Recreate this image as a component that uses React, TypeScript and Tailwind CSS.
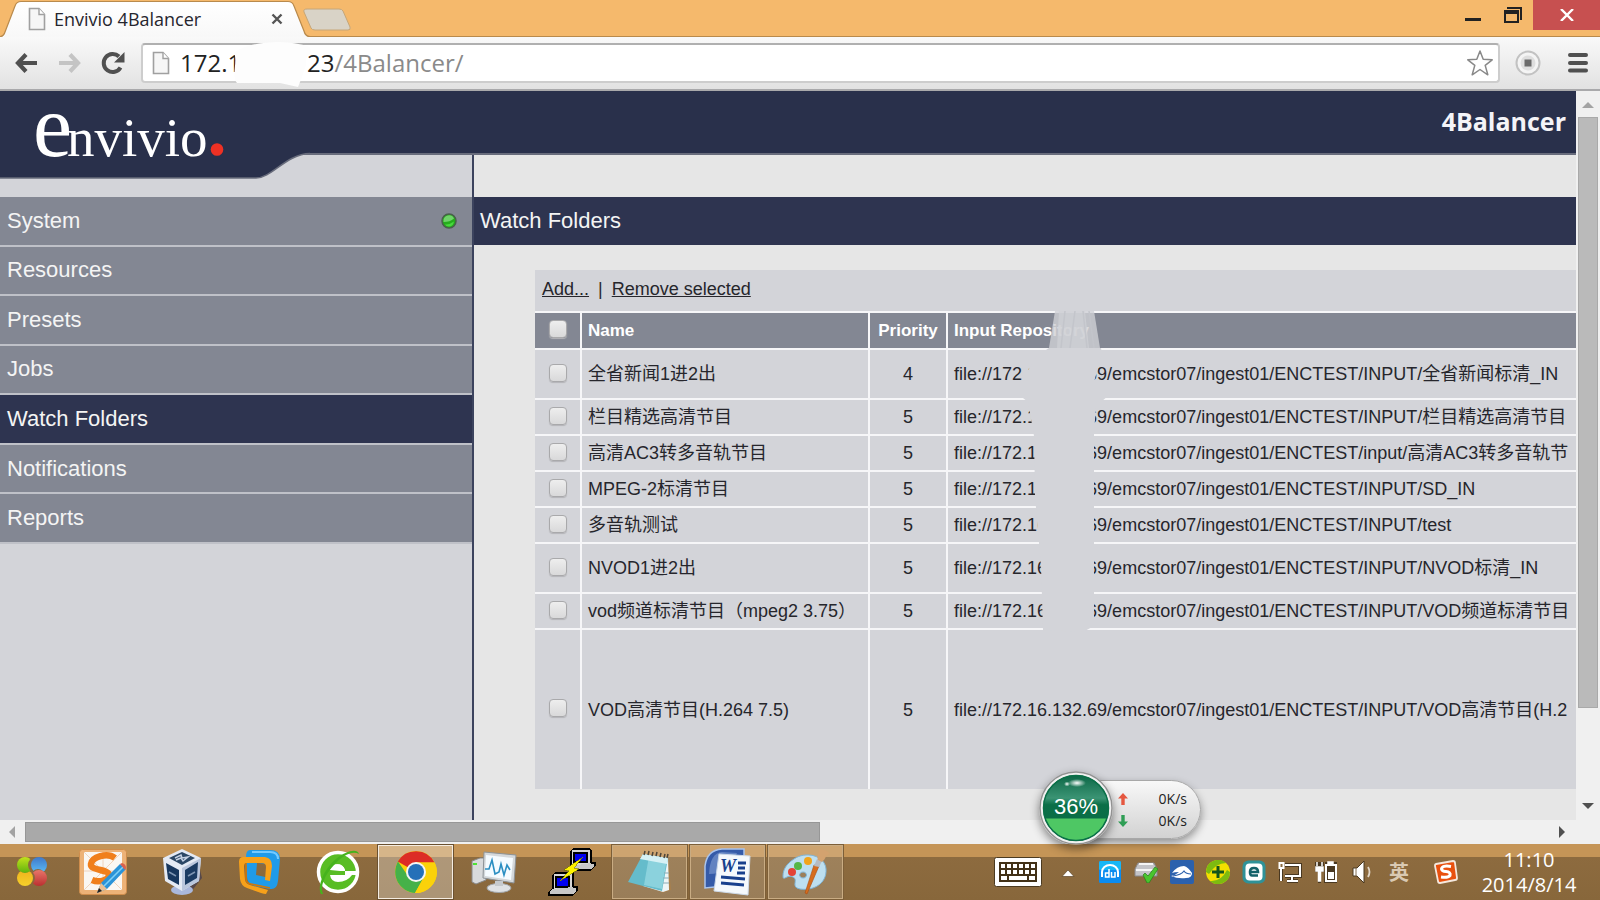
import type { ReactNode } from "react";

const sans = "font-['Liberation_Sans','Noto_Sans_CJK_SC',sans-serif]";
const ui = "font-['Open_Sans','Noto_Sans_CJK_SC',sans-serif]";

const navItems = ["System", "Resources", "Presets", "Jobs", "Watch Folders", "Notifications", "Reports"];

const base = "file://172.16.132.69/emcstor07/ingest01/ENCTEST/";

const rows = [
  { name: "全省新闻1进2出", priority: 4, input: "INPUT/全省新闻标清_IN", height: "h-[50px]" },
  { name: "栏目精选高清节目", priority: 5, input: "INPUT/栏目精选高清节目", height: "h-[36px]" },
  { name: "高清AC3转多音轨节目", priority: 5, input: "input/高清AC3转多音轨节", height: "h-[36px]" },
  { name: "MPEG-2标清节目", priority: 5, input: "INPUT/SD_IN", height: "h-[36px]" },
  { name: "多音轨测试", priority: 5, input: "INPUT/test", height: "h-[36px]" },
  { name: "NVOD1进2出", priority: 5, input: "INPUT/NVOD标清_IN", height: "h-[50px]" },
  { name: "vod频道标清节目（mpeg2 3.75）", priority: 5, input: "INPUT/VOD频道标清节目", height: "h-[36px]" },
  { name: "VOD高清节目(H.264 7.5)", priority: 5, input: "INPUT/VOD高清节目(H.2", height: "h-[161px]" },
];

function PageIcon() {
  return (
    <svg width="18" height="24" viewBox="0 0 18 24" className="shrink-0">
      <path d="M1.5 1.5h9.5l5.5 6v15h-15z" fill="#f6f6f6" stroke="#a0a0a0" strokeWidth="1.6" />
      <path d="M11 1.5v6h5.5" fill="#fff" stroke="#a0a0a0" strokeWidth="1.4" />
    </svg>
  );
}

function TabStrip() {
  return (
    <div className="relative flex h-[37px] shrink-0 items-start justify-between border-b border-[#b98a4c] bg-[#f5b96c]">
      <div className="relative h-[37px] w-[360px]">
        <svg width="360" height="37" viewBox="0 0 360 37" className="absolute left-0 top-0">
          <defs>
            <linearGradient id="tab" x1="0" y1="0" x2="0" y2="1">
              <stop offset="0" stopColor="#ffffff" />
              <stop offset="1" stopColor="#f8f8f8" />
            </linearGradient>
          </defs>
          <path d="M0 37C3 37 4 35 5 32L15 6C16 3 18 1.5 21 1.5H288C291 1.5 293 3 294 6L304 31C305 35 307 37 310 37Z" fill="url(#tab)" />
          <path d="M0 36.500C3 36.500 4 35 5 32L15 6C16 3 18 1.500 21 1.500H288C291 1.500 293 3 294 6L304 31C305 35 307 36.500 310 36.500" fill="none" stroke="#b98a4c" strokeWidth="1.2" />
          <path d="M307 9H339Q342 9 343 11L350 27Q351 30 348 30H315Q312 30 311 28L304 12Q303 9 307 9Z" fill="#d9d3c7" stroke="#c6a678" />
        </svg>
        <div className="relative flex h-[37px] items-center pl-[28px] pt-px">
          <PageIcon />
          <span className="ml-[8px] w-[217px] text-[18px] leading-6 text-[#26262e]">Envivio 4Balancer</span>
          <button type="button" aria-label="Close tab" className="flex size-3">
            <svg width="12" height="12" viewBox="0 0 12 12"><path d="M1.500 1.500l9 9M10.500 1.500l-9 9" stroke="#555" strokeWidth="2.4" /></svg>
          </button>
        </div>
      </div>
      <div className="flex">
        <button type="button" aria-label="Minimize" className="flex h-[30px] w-[40px] items-center justify-center">
          <svg width="16" height="20" viewBox="0 0 16 20"><rect y="13" width="16" height="3" fill="#222" /></svg>
        </button>
        <button type="button" aria-label="Restore" className="flex h-[30px] w-[40px] items-center justify-center">
          <svg width="18" height="16" viewBox="0 0 18 16">
            <path d="M3 1h14v12" fill="none" stroke="#222" strokeWidth="2" />
            <path d="M1 5h13v10H1z" fill="none" stroke="#222" strokeWidth="2" />
            <path d="M0 3h15v4H0z" fill="#222" />
          </svg>
        </button>
        <button type="button" aria-label="Close window" className="flex h-[30px] w-[67px] items-center justify-center bg-[#c75050]">
          <svg width="14" height="12" viewBox="0 0 14 12"><path d="M1 0l12 12M13 0L1 12" stroke="#fff" strokeWidth="2.400" /></svg>
        </button>
      </div>
    </div>
  );
}

function Toolbar() {
  return (
    <div className="flex h-[54px] shrink-0 items-center border-b-2 border-[#a9a9ab] bg-linear-to-b from-[#f9f9f9] to-[#e2e2e2] pl-[15px] pr-[12px]">
      <button type="button" aria-label="Back" className="w-[43px]">
        <svg width="23" height="20" viewBox="0 0 23 20"><path d="M22 10H3M11 1.500L3 10l8 8.500" fill="none" stroke="#505050" strokeWidth="4.200" /></svg>
      </button>
      <button type="button" aria-label="Forward" className="w-[43px]">
        <svg width="23" height="20" viewBox="0 0 23 20"><path d="M1 10h19M12 1.500l8 8.500-8 8.500" fill="none" stroke="#c4c4c4" strokeWidth="4.200" /></svg>
      </button>
      <button type="button" aria-label="Reload" className="w-[40px]">
        <svg width="25" height="24" viewBox="0 0 25 24">
          <path d="M19.500 16.500A9 9 0 1 1 18 5.500" fill="none" stroke="#505050" strokeWidth="4" />
          <path d="M23.500 1v10.500H13z" fill="#505050" />
        </svg>
      </button>
      <div className="relative flex h-[40px] flex-1 items-center rounded-[4px] border-2 border-[#cdcdcd] border-t-[#b0b0b0] bg-white pl-[9px] pr-[4px]">
        <PageIcon />
        <div className="ml-[10px] flex flex-1 text-[24px] leading-8 text-[#8a8a8a]">
          <span className="w-[127px] text-[#222]">172.1</span>
          <span className="text-[#222]">23</span>
          <span>/4Balancer/</span>
        </div>
        <svg width="80" height="46" viewBox="0 0 80 46" className="absolute left-[89px] -top-[4px]">
          <path d="M2 12C15 1 52 -3 78 6L79 12Q73 14 74 24L70 36L66 46L48 42H5C-1 36 6 20 2 12Z" fill="#fdfdfd" />
        </svg>
        <button type="button" aria-label="Bookmark this page">
          <svg width="28" height="28" viewBox="0 0 28 28">
            <path d="M14 2l3.200 8.300 9 .5-7 5.600 2.600 9.400L14 20.500l-7.800 5.300 2.600-9.400-7-5.600 9-.5z" fill="#fff" stroke="#888" strokeWidth="1.500" strokeLinejoin="round" />
          </svg>
        </button>
      </div>
      <button type="button" aria-label="Extension" className="ml-[15px]">
        <svg width="26" height="26" viewBox="0 0 26 26">
          <circle cx="13" cy="13" r="11.500" fill="#f4f4f4" stroke="#c2c2c2" strokeWidth="2" />
          <circle cx="13" cy="13" r="7.500" fill="#dedede" />
          <rect x="9.500" y="9.500" width="7" height="7" fill="#6a6a6a" />
        </svg>
      </button>
      <button type="button" aria-label="Menu" className="ml-[27px]">
        <svg width="20" height="22" viewBox="0 0 20 22"><path d="M2 3h16M2 11h16M2 18.500h16" stroke="#505050" strokeWidth="4" strokeLinecap="round" /></svg>
      </button>
    </div>
  );
}

function Brand() {
  return (
    <header className="relative z-10 flex h-[64px] shrink-0 justify-between border-b-2 border-[#686c7c] bg-[#29304b] pl-[33px] pr-[10px]">
      <svg width="320" height="27" viewBox="0 0 320 27" className="absolute left-0 top-[61px]">
        <path d="M0 0V26H256C272 26 286 2 310 1.500V0Z" fill="#29304b" />
        <path d="M0 26H256C272 26 286 2 310 1.500" fill="none" stroke="#686c7c" strokeWidth="1.500" />
      </svg>
      <div className="relative flex items-baseline font-['Liberation_Serif',serif] text-[55px] leading-[72px] text-white">
        <span className="w-[34px] text-[88px]">e</span>
        <span>nvivio</span>
        <svg width="18" height="13" viewBox="0 0 18 13"><circle cx="9" cy="6.500" r="6.300" fill="#ee3124" /></svg>
      </div>
      <h1 className="pt-[14px] text-[25px] font-bold leading-8 text-[#f4f4f8]">4Balancer</h1>
    </header>
  );
}

function Sidebar() {
  return (
    <aside className={`w-[474px] shrink-0 border-r-2 border-[#3c435e] bg-[#d3d4d9] pt-[42px] ${sans}`}>
      <nav className="grid h-[347px] grid-rows-7">
        {navItems.map((item) => (
          <a
            key={item}
            href="#"
            className={`flex items-center justify-between border-b-2 border-[#bfc1c8] pl-[7px] pr-[15px] text-[22px] leading-6 text-[#f4f4f4] ${item === "Watch Folders" ? "bg-[#2e3450]" : "bg-[#838793]"}`}
          >
            {item}
            {item === "System" && (
              <svg width="16" height="16" viewBox="0 0 16 16">
                <circle cx="8" cy="8" r="7" fill="#25ad1c" stroke="#48604a" strokeWidth="1.500" />
                <path d="M2.500 8A5.500 5.500 0 0 1 13 5.500Q9 9 2.500 9Z" fill="#70d26a" />
                <path d="M4 11.500Q8 12 13 8.500Q12 13.500 8 13.500Q5 13.500 4 11.500Z" fill="#48d83e" />
              </svg>
            )}
          </a>
        ))}
      </nav>
    </aside>
  );
}

function Tick({ label }: { label: string }) {
  return (
    <input
      type="checkbox"
      aria-label={label}
      className="mx-auto block size-[18px] appearance-none rounded-[4px] border border-[#a9a9ab] bg-linear-to-b from-[#eeeeee] to-[#d9d9da] shadow-[0_1px_1px_#b4b4b8]"
    />
  );
}

function FolderTable() {
  const cell = "border-t-2 border-l-2 border-[#f6f6f8] px-[6px]";
  const tickCell = "border-t-2 border-[#f6f6f8] pb-[3px]";
  return (
    <table className="w-full table-fixed border-separate border-spacing-0 whitespace-nowrap text-left text-[18px] leading-6 text-[#26262c]">
      <colgroup>
        <col className="w-[45px]" />
        <col className="w-[288px]" />
        <col className="w-[78px]" />
        <col />
      </colgroup>
      <thead>
        <tr className="h-[37px] bg-[#838793] text-[17px] text-white">
          <th className={tickCell}><Tick label="Select all" /></th>
          <th className={cell}>Name</th>
          <th className={`${cell} text-center`}>Priority</th>
          <th className={cell}>Input Repository</th>
        </tr>
      </thead>
      <tbody>
        {rows.map((row) => (
          <tr key={row.name} className={`bg-[#d3d4d9] ${row.height}`}>
            <td className={tickCell}><Tick label={row.name} /></td>
            <td className={cell}>{row.name}</td>
            <td className={`${cell} text-center`}>{row.priority}</td>
            <td className={cell}>{base}{row.input}</td>
          </tr>
        ))}
      </tbody>
    </table>
  );
}

function Smudge() {
  return (
    <svg width="100" height="334" viewBox="0 0 100 334" className="absolute left-[488px] top-[36px]">
      <path d="M32 5H71L77 42H26Z" fill="#d0d1d6" opacity=".8" />
      <path d="M36 5H62L66 42H34Z" fill="#d0d1d6" opacity=".7" />
      <path d="M42 5L38 42M52 5L47 42M60 5L64 42M66 5L71 42" stroke="#c3c5cb" strokeWidth="1.500" />
      <path d="M26 42H78L79 48L71 76L85 90L73 100L71 128V320L60 326L20 324L18 260L12 190L11 130L5 96L0 92V72L14 50Z" fill="#d3d4d9" />
    </svg>
  );
}

function MainPanel() {
  return (
    <main className={`min-w-0 flex-1 overflow-hidden bg-[#e6e6e6] pt-[42px] ${sans}`}>
      <h2 className="h-[48px] bg-[#2e3450] pl-[6px] text-[22px] leading-[48px] text-[#f4f4f4]">Watch Folders</h2>
      <div className="relative ml-[61px] mt-[25px]">
        <div className="flex h-[41px] items-center gap-[9px] bg-[#d3d4d9] pl-[7px] pb-[3px] text-[18px] leading-6 text-[#26262c]">
          <a href="#" className="underline">Add...</a>
          <span>|</span>
          <a href="#" className="underline">Remove selected</a>
        </div>
        <FolderTable />
        <Smudge />
      </div>
    </main>
  );
}

function VerticalScroll() {
  return (
    <div className="flex w-[24px] shrink-0 flex-col items-center bg-[#f0f0f0]">
      <svg width="24" height="26" viewBox="0 0 24 26"><path d="M6 17l6-6 6 6z" fill="#a3a3a3" /></svg>
      <div className="w-[20px] flex-[591] border border-[#a9a9a9] bg-[#bababa]" />
      <div className="flex-[84]" />
      <svg width="24" height="28" viewBox="0 0 24 28"><path d="M6 11h12l-6 6z" fill="#505050" /></svg>
    </div>
  );
}

function HorizontalScroll() {
  return (
    <div className="flex h-[24px] shrink-0 items-center bg-[#f0f0f0] pr-[24px]">
      <svg width="25" height="24" viewBox="0 0 25 24"><path d="M15 6v12l-6-6z" fill="#a3a3a3" /></svg>
      <div className="h-[20px] flex-[794] border border-[#979797] bg-[#a9a9a9]" />
      <div className="flex-[729]" />
      <svg width="28" height="24" viewBox="0 0 28 24"><path d="M11 6v12l6-6z" fill="#505050" /></svg>
    </div>
  );
}

function SpeedWidget() {
  return (
    <div className={`absolute bottom-[55px] right-[399px] z-20 flex items-center ${sans}`}>
      <div className="relative z-10 size-[74px] rounded-full shadow-[0_4px_10px_rgba(0,0,0,0.45)]">
        <svg width="74" height="74" viewBox="0 0 74 74" className="absolute left-0 top-0">
          <defs>
            <linearGradient id="ball" x1="0" y1="0" x2="0" y2="1">
              <stop offset="0" stopColor="#0c6746" />
              <stop offset="0.350" stopColor="#3b9474" />
              <stop offset="0.450" stopColor="#0b6f48" />
              <stop offset="1" stopColor="#096c44" />
            </linearGradient>
            <radialGradient id="shine"><stop offset="0" stopColor="#fff" /><stop offset="1" stopColor="#fff" stopOpacity="0" /></radialGradient>
          </defs>
          <circle cx="37" cy="37" r="36" fill="#f1f1f1" stroke="#929292" strokeWidth="1.500" />
          <circle cx="37" cy="37" r="33" fill="url(#ball)" />
          <path d="M6 47.500H68A33 33 0 0 1 6 47.500Z" fill="#4ec764" />
          <circle cx="37" cy="37" r="32.500" fill="none" stroke="#0a7048" strokeWidth="1.500" />
          <ellipse cx="38" cy="12" rx="9" ry="4" fill="url(#shine)" />
          <ellipse cx="28" cy="13" rx="3" ry="2.500" fill="url(#shine)" />
        </svg>
        <span className="relative block text-center text-[22px] leading-[72px] text-white">36%</span>
      </div>
      <div className={`-ml-[30px] mt-[3px] flex h-[59px] w-[118px] flex-col justify-center rounded-r-full border border-[#a8a8a8] bg-linear-to-b from-[#f8f8f8] to-[#d2d2d2] pl-[34px] pr-[13px] text-[14px] leading-[22px] text-[#222] shadow-[0_4px_8px_rgba(0,0,0,0.4)] ${ui}`}>
        <div className="flex items-center justify-between">
          <svg width="10" height="12" viewBox="0 0 10 12"><path d="M5 0l5 5.500H6.700V12H3.300V5.500H0z" fill="#e5573f" /></svg>
          <span>0K/s</span>
        </div>
        <div className="flex items-center justify-between">
          <svg width="10" height="12" viewBox="0 0 10 12"><path d="M5 12l5-5.500H6.700V0H3.300v6.500H0z" fill="#2f9e55" /></svg>
          <span>0K/s</span>
        </div>
      </div>
    </div>
  );
}

function StartOrb() {
  return (
    <svg width="32" height="32" viewBox="0 0 32 32">
      <defs>
        <mask id="bite-green"><rect width="32" height="32" fill="#fff" /><circle cx="20" cy="9" r="8" fill="#000" /></mask>
        <mask id="bite-blue"><rect width="32" height="32" fill="#fff" /><circle cx="22" cy="20" r="7" fill="#000" /></mask>
        <mask id="bite-red"><rect width="32" height="32" fill="#fff" /><circle cx="11" cy="22" r="8" fill="#000" /></mask>
        <mask id="bite-yellow"><rect width="32" height="32" fill="#fff" /><circle cx="9" cy="10" r="7" fill="#000" /></mask>
        <linearGradient id="green-leaf" x1="0" y1="0" x2="0" y2="1"><stop offset="0" stopColor="#c3e21c" /><stop offset="1" stopColor="#5fb20e" /></linearGradient>
        <linearGradient id="blue-leaf" x1="0" y1="0" x2="0" y2="1"><stop offset="0" stopColor="#3f78c9" /><stop offset="1" stopColor="#5bbcf7" /></linearGradient>
        <linearGradient id="red-leaf" x1="0" y1="0" x2="0" y2="1"><stop offset="0" stopColor="#e8766a" /><stop offset="1" stopColor="#bb2f30" /></linearGradient>
        <linearGradient id="yellow-leaf" x1="0" y1="0" x2="0" y2="1"><stop offset="0" stopColor="#efb31c" /><stop offset="1" stopColor="#f6d02b" /></linearGradient>
      </defs>
      <circle cx="9" cy="9" r="8" fill="url(#green-leaf)" mask="url(#bite-green)" />
      <circle cx="23" cy="9" r="8" fill="url(#blue-leaf)" mask="url(#bite-blue)" />
      <circle cx="23" cy="22" r="8" fill="url(#red-leaf)" mask="url(#bite-red)" />
      <circle cx="9" cy="22" r="8" fill="url(#yellow-leaf)" mask="url(#bite-yellow)" />
    </svg>
  );
}

function NoteIcon() {
  return (
    <svg width="49" height="46" viewBox="0 0 49 46">
      <rect x="0.500" y="0.500" width="47" height="45" rx="3" fill="#edb277" stroke="#cf8d4c" />
      <rect x="5" y="3" width="38" height="38" fill="#faf7f3" />
      <path d="M5 3l38 38M43 3L5 41M24 3v38M5 22h38" stroke="#eccaae" strokeWidth="0.800" />
      <path d="M36 9C28 3 13 8 12 15C11 22 30 20 30 26C30 31 20 34 13 31" fill="none" stroke="#f07f1c" strokeWidth="6.500" />
      <path d="M18 44l4-10 19-19 6 5-19 20z" fill="#2a93d8" />
      <path d="M25 37l19-19" stroke="#7fd0f5" strokeWidth="1.600" />
      <path d="M18 44l4-10 6 6z" fill="#eabf92" />
      <path d="M18 44l2-5 3 3z" fill="#222" />
      <path d="M41 15l2-1q4 1 4 5l-1 2z" fill="#d9614f" />
    </svg>
  );
}

function CubeIcon() {
  return (
    <svg width="42" height="48" viewBox="0 0 42 48">
      <path d="M38 18l3 12-12 15-8-3z" fill="#2c2d55" opacity=".55" />
      <ellipse cx="21" cy="42" rx="11" ry="5" fill="#aab8dc" />
      <path d="M2 10L21 1l19 9-2 23-17 10L4 33z" fill="#e4eaf4" />
      <path d="M21 20v23l17-10 2-23z" fill="#bac7dd" />
      <path d="M8 10l13-6 13 6-13 7z" fill="#2b4765" />
      <path d="M5 15l13 7v15L7 31z" fill="#17375e" />
      <path d="M24 22l13-8-1 16-12 7z" fill="#1a3b62" />
      <path d="M14 10l6-3 1 3 6-1-5 4-2-3-5 2" stroke="#c5d1e3" fill="none" strokeWidth="1.500" />
      <path d="M8 24l7 4M27 28l7-4" stroke="#7e95b2" strokeWidth="1.500" />
    </svg>
  );
}

function SquaresIcon() {
  return (
    <svg width="44" height="46" viewBox="0 0 44 46">
      <path d="M12 1h20q10 0 10 9l-2 22q-1 9-8 8l-15-3q-8-2-8-9L8 8q0-7 4-7zM19 14l-1 12 14 3 1-14z" fill="#209be9" fillRule="evenodd" />
      <path d="M14 3h18q8 0 8 7" fill="none" stroke="#75caff" strokeWidth="2" />
      <path d="M5 8h22q7 1 7 9l-2 15-5-1 1-13q0-4-4-4H8q-2 0-2 4l1 13q1 4 5 5l18 5-2 4q-2 0-5-1L9 39q-6-2-7-9L1 13q0-5 4-5z" fill="#f7a11a" />
      <path d="M8 14v16q0 4 5 5l19 4" fill="none" stroke="#d27808" strokeWidth="1.500" />
    </svg>
  );
}

function BrowserEIcon() {
  return (
    <svg width="44" height="48" viewBox="0 0 44 48">
      <circle cx="22" cy="24" r="19.500" fill="#58bd24" stroke="#fff" strokeWidth="3.500" />
      <path d="M14 22A8 9 0 0 1 29 22ZM14 27H28L36 27Q31 34 22 34Q15 34 14 27Z" fill="#fff" />
      <path d="M14 22A8 9 0 0 1 29 22V27H41V23H24" fill="#fff" />
      <path d="M5 46C1 38 8 21 20 11C30 3 41 0 43 6C36 2 26 8 18 17C8 28 4 38 7 46Z" fill="#46b31d" />
    </svg>
  );
}

function ChromeIcon() {
  return (
    <svg width="44" height="44" viewBox="0 0 44 44">
      <circle cx="22" cy="22" r="21" fill="#fbd20a" />
      <path d="M22 22L3.800 11.500A21 21 0 0 1 40.500 12.500H22Z" fill="#dc2c26" />
      <path d="M4 11.500A21 21 0 0 0 21 43L30 27L22 22L14 26Z" fill="#45b149" />
      <path d="M40.500 12.500H22V22L30 27L21 43A21 21 0 0 0 40.500 12.500Z" fill="#fbd20a" />
      <circle cx="22" cy="22" r="10" fill="#f5f5f5" />
      <circle cx="22" cy="22" r="8" fill="#2570b8" />
    </svg>
  );
}

function MonitorIcon() {
  return (
    <svg width="46" height="42" viewBox="0 0 46 42">
      <path d="M1 10l8-3h6v22L5 33 1 31z" fill="#d8dadc" stroke="#888" />
      <path d="M2 13h4" stroke="#4ee336" strokeWidth="2" />
      <path d="M13 1l32 3-2 28-31-5z" fill="#d4d8db" stroke="#8c9296" />
      <path d="M15 4l27 3-2 22-26-4z" fill="#f5fbff" />
      <path d="M14 18h4l3-9 3 14 4-2 2-8 3 11 3-10 3 5" fill="none" stroke="#2a8ec2" strokeWidth="1.600" />
      <ellipse cx="28" cy="37" rx="12" ry="4.500" fill="#dfe2e4" stroke="#a0a4a7" />
      <path d="M24 30h8v5h-8z" fill="#c6cacd" />
    </svg>
  );
}

function TerminalIcon() {
  return (
    <svg width="48" height="48" viewBox="0 0 48 48" shapeRendering="crispEdges">
      <g stroke="#000" strokeWidth="1.200">
        <path d="M23 3l2-2h17l1 1v13l-3 3H23z" fill="#d6d6d6" />
        <path d="M26 5h13v9H26z" fill="#0000f0" />
        <path d="M24 18l-4 4h23l4-4v-3h-4" fill="#c8c8c8" />
        <path d="M5 27l2-2h18v15l-3 3H5z" fill="#d6d6d6" />
        <path d="M8 29h13v10H8z" fill="#0000f0" />
        <path d="M4 41l-3 3v3h24l4-4v-4h-4" fill="#c8c8c8" />
      </g>
      <path d="M35 9L16 22l5 1-9 10 19-12-5-1z" fill="#fff300" stroke="#777700" strokeWidth="0.600" />
    </svg>
  );
}

function NotebookIcon() {
  return (
    <svg width="46" height="44" viewBox="0 0 46 44">
      <path d="M41 6l3 34-9 3z" fill="#a9804c" />
      <path d="M36 8l5-1 1 33-6 2-20-6z" fill="#eef5f7" />
      <path d="M16 4l25 4-6 33L1 32z" fill="#65bccb" />
      <path d="M22 6l18 2-5 31-18-4z" fill="#9bdbe4" opacity=".7" />
      <path d="M16 4l25 4-1 6L13 9z" fill="#d6f1f5" />
      <path d="M37 23h5M36 28h6M36 33h6" stroke="#8babb4" />
      <path d="M17 5l1-4M21 5l1-4M25 6l1-4M29 6l1-4M33 7l1-4M37 8l1-4M40 8l1-4" stroke="#4d4438" strokeWidth="1.500" />
    </svg>
  );
}

function WordIcon() {
  return (
    <svg width="48" height="48" viewBox="0 0 48 48">
      <path d="M1 40V18Q3 2 18 1h22v35z" fill="#355ba8" stroke="#a9c4ec" strokeWidth="1.500" />
      <path d="M5 26Q25 26 33 5L18 4Q6 5 5 26z" fill="#819fd2" opacity=".6" />
      <path d="M15 6l31 2-2 39-34-4z" fill="#f5f9fc" stroke="#ccd9e8" />
      <path d="M34 15h8M34 20h7M33 25h8M17 29l24 2M17 35l23 2" stroke="#18408d" strokeWidth="2.800" />
      <text x="16" y="24" fontFamily="Liberation Serif" fontSize="18" fontWeight="bold" fontStyle="italic" fill="#18408d">W</text>
    </svg>
  );
}

function PaletteIcon() {
  return (
    <svg width="48" height="46" viewBox="0 0 48 46">
      <path fillRule="evenodd" d="M12 10C23 2 43 6 44 20C45 35 31 42 18 40C8 38 17 31 11 28C5 25 1 33 1 27C1 21 4 15 12 10ZM21 23a3.500 3 0 1 0 .1 0z" fill="#bddff0" stroke="#7fb5d8" />
      <circle cx="10" cy="23" r="4" fill="#e34437" />
      <circle cx="16" cy="17" r="4" fill="#55b746" />
      <circle cx="26" cy="12" r="4" fill="#f2a41b" />
      <path d="M37 17L25 45l-2-1 9-28z" fill="#d66d1d" stroke="#aa4e12" strokeWidth="0.600" />
      <path d="M32 17l5 1 3-6-5-2z" fill="#b6bbc0" />
      <path d="M36 11C34 5 38 4 37 0Q46 1 48 5C43 6 44 10 40 13Z" fill="#d3a26f" />
    </svg>
  );
}

const tasks: { label: string; icon: ReactNode; state: string }[] = [
  { label: "Notes", icon: <NoteIcon />, state: "border-transparent" },
  { label: "VirtualBox", icon: <CubeIcon />, state: "border-transparent" },
  { label: "VMware", icon: <SquaresIcon />, state: "border-transparent" },
  { label: "360 Browser", icon: <BrowserEIcon />, state: "border-transparent" },
  { label: "Chrome", icon: <ChromeIcon />, state: "border-[#f5ede2] bg-white/30 outline outline-[#6b5130]" },
  { label: "System monitor", icon: <MonitorIcon />, state: "border-transparent" },
  { label: "PuTTY", icon: <TerminalIcon />, state: "border-transparent" },
  { label: "Notepad", icon: <NotebookIcon />, state: "border-[#c9ac83] bg-white/15 outline outline-[#7d5f38]" },
  { label: "Word", icon: <WordIcon />, state: "border-[#c9ac83] bg-white/15 outline outline-[#7d5f38]" },
  { label: "Paint", icon: <PaletteIcon />, state: "border-[#c9ac83] bg-white/15 outline outline-[#7d5f38]" },
];

const tray: { label: string; icon: ReactNode }[] = [
  {
    label: "Baidu music",
    icon: (
      <svg width="22" height="22" viewBox="0 0 22 22">
        <rect width="22" height="22" rx="1.500" fill="#0b8cf0" />
        <rect width="22" height="9" rx="1.500" fill="#18b7f5" />
        <path d="M3 14V11a8 7 0 0 1 16 0v3" fill="none" stroke="#fff" strokeWidth="2" />
        <path d="M2 11h2v5H2zM18 11h2v5h-2z" fill="#fff" />
        <path d="M10 8v8H6.500v-4H10M12.500 11v5H16v-5" fill="none" stroke="#fff" strokeWidth="1.500" />
      </svg>
    ),
  },
  {
    label: "Printer",
    icon: (
      <svg width="24" height="22" viewBox="0 0 24 22">
        <path d="M4 2h16l3 6v7H1V8z" fill="#c4c4c8" stroke="#88888c" />
        <path d="M5 3h14M2 9h20" stroke="#f5f5f5" strokeWidth="2" />
        <path d="M9 14l2-2 3 3 7-9 3 2-9 14h-2z" fill="#49c52e" stroke="#257d18" strokeWidth="0.700" />
      </svg>
    ),
  },
  {
    label: "Cloud drive",
    icon: (
      <svg width="24" height="24" viewBox="0 0 24 24">
        <rect width="24" height="24" rx="2" fill="#2b61ad" />
        <path d="M1 16q5-1 8-4q-5 0-7 1Q7 6 14 6q4 1 8 7q0 5-6 5Q8 19 1 16z" fill="#fff" />
        <path d="M3 16q8-1 11-5q2 3 7 3" stroke="#2b61ad" fill="none" strokeWidth="1.200" />
      </svg>
    ),
  },
  {
    label: "Security guard",
    icon: (
      <svg width="24" height="24" viewBox="0 0 24 24">
        <circle cx="12" cy="12" r="12" fill="#f3e000" />
        <path d="M0 12A12 12 0 0 1 20 3Q10 3 3 14ZM24 12A12 12 0 0 1 4 21Q15 22 21 10Z" fill="#7dbb10" />
        <path d="M12 6v12M6 12h12" stroke="#14551b" strokeWidth="3" />
      </svg>
    ),
  },
  {
    label: "ESET",
    icon: (
      <svg width="24" height="24" viewBox="0 0 24 24">
        <rect x="0.500" y="0.500" width="23" height="23" rx="6" fill="#2f9298" />
        <rect x="3.500" y="3.500" width="17" height="17" rx="4" fill="#fff" />
        <path d="M16 15.500H10Q8 15.500 8 12Q8 8 12 8Q16 8 16 12H9" fill="none" stroke="#14626a" strokeWidth="2.600" />
      </svg>
    ),
  },
  {
    label: "Network",
    icon: (
      <svg width="24" height="22" viewBox="0 0 24 22">
        <g fill="none" stroke="#493821" strokeWidth="4"><path d="M7 4h15v11H7M14 15v5M9 20h11M3 7v13" /></g>
        <g fill="none" stroke="#fff" strokeWidth="2"><path d="M7 4h15v11H7M14 15v5M9 20h11M3 7v13M1.500 2h4v5h-4z" /></g>
      </svg>
    ),
  },
  {
    label: "Battery",
    icon: (
      <svg width="24" height="24" viewBox="0 0 24 24">
        <path d="M1 2h9v10H7v11H4V12H1zM11 2h12v21H10z" fill="#493821" />
        <path d="M3 2v4M8 2v4M2 7h7v4H6.500v10h-2V11H2zM14 2h5v2h-5z" stroke="#fff" strokeWidth="1.500" fill="#fff" />
        <path d="M12 5h10v16H12z" fill="none" stroke="#fff" strokeWidth="2" />
        <path d="M14 12h6v7h-6z" fill="#fff" />
      </svg>
    ),
  },
  {
    label: "Volume",
    icon: (
      <svg width="20" height="24" viewBox="0 0 20 24">
        <path d="M1 8h4l7-7v22l-7-7H1z" fill="#fff" stroke="#493821" />
        <path d="M4 8v8" stroke="#827056" />
        <path d="M16 7q3 5 0 10" fill="none" stroke="#e2d7c8" strokeWidth="1.800" />
      </svg>
    ),
  },
];

function Taskbar() {
  return (
    <footer className="flex h-[56px] shrink-0 items-stretch justify-between bg-[linear-gradient(to_bottom,#c59557_0,#c59557_13px,#8d6b3f_13px,#88673b_100%)]">
      <div className="flex items-stretch gap-[3px]">
        <button type="button" aria-label="Start" className="flex w-[63px] items-center justify-center"><StartOrb /></button>
        {tasks.map((task) => (
          <button
            key={task.label}
            type="button"
            aria-label={task.label}
            className={`my-px flex w-[75px] items-center justify-center border ${task.state}`}
          >
            {task.icon}
          </button>
        ))}
      </div>
      <div className="flex items-center pr-[16px] text-white">
        <button type="button" aria-label="Keyboard" className="mr-[9px]">
          <svg width="48" height="30" viewBox="0 0 48 30">
            <rect x="0.500" y="0.500" width="47" height="29" rx="2" fill="#fff" stroke="#4b3a20" />
            <rect x="5" y="5" width="38" height="20" fill="#423117" />
            <path d="M7 9h34M7 15h34" stroke="#fff" strokeWidth="4" strokeDasharray="4 2" />
            <path d="M7 21h6M15 21h18M35 21h6" stroke="#fff" strokeWidth="4" />
          </svg>
        </button>
        <button type="button" aria-label="Show hidden icons" className="flex w-[34px] justify-center pt-[2px]">
          <svg width="14" height="8" viewBox="0 0 14 8"><path d="M1 7.500l6-6.500 6 6.500z" fill="#fff" stroke="#5c4526" strokeWidth="0.700" /></svg>
        </button>
        <span className="w-[7px]" />
        {tray.map((item) => (
          <button key={item.label} type="button" aria-label={item.label} className="flex w-[36px] justify-center">
            {item.icon}
          </button>
        ))}
        <button type="button" className="w-[38px] text-center font-['Noto_Sans_CJK_SC',sans-serif] text-[20px] font-bold leading-6 text-[#d9c9b2]">英</button>
        <button type="button" aria-label="Sogou input" className="flex w-[56px] justify-center">
          <svg width="24" height="24" viewBox="0 0 24 24">
            <path d="M2 4L19 1q2 0 2 2l2 15q0 2-2 2L6 23q-2 0-2-2L1 6q0-2 1-2z" fill="#e9500e" stroke="#f5e8dd" strokeWidth="1.800" />
            <path d="M17 6.500Q8 5 7.500 9Q8 11.500 12 11.500Q17 12 16 15.500Q14 18 7 17" fill="none" stroke="#fff" strokeWidth="3" />
          </svg>
        </button>
        <div className="flex w-[110px] flex-col items-center text-[20px] leading-[25px]">
          <span>11:10</span>
          <span>2014/8/14</span>
        </div>
      </div>
    </footer>
  );
}

export default function App() {
  return (
    <div className={`relative flex h-screen w-full flex-col overflow-hidden ${ui}`}>
      <TabStrip />
      <Toolbar />
      <div className="flex min-h-0 flex-1">
        <div className="flex min-w-0 flex-1 flex-col">
          <Brand />
          <div className="flex min-h-0 flex-1">
            <Sidebar />
            <MainPanel />
          </div>
        </div>
        <VerticalScroll />
      </div>
      <HorizontalScroll />
      <Taskbar />
      <SpeedWidget />
    </div>
  );
}
